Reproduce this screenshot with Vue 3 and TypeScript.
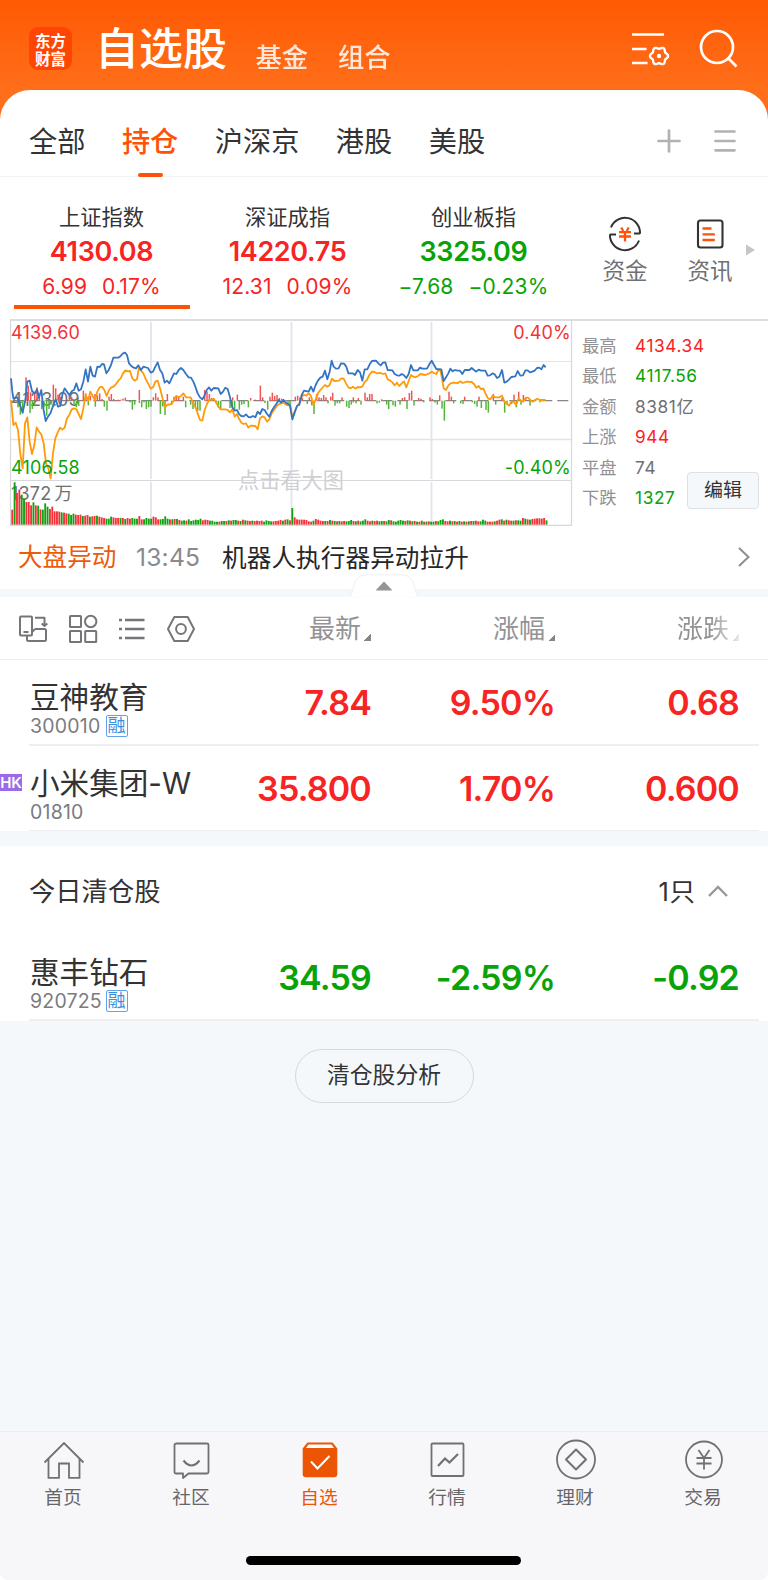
<script setup lang="ts">
type Trend = 'up' | 'down' | 'flat'

interface IndexCard { name: string; value: string; diff: string; pct: string; trend: Trend; active?: boolean }
interface Stat { label: string; value: string; trend: Trend }
interface Stock { name: string; code: string; margin?: boolean; hk?: boolean; price: string; pct: string; diff: string; trend: Trend }

const tabs = ['全部', '持仓', '沪深京', '港股', '美股']
const activeTab = '持仓'

const indexes: IndexCard[] = [
  { name: '上证指数', value: '4130.08', diff: '6.99', pct: '0.17%', trend: 'up', active: true },
  { name: '深证成指', value: '14220.75', diff: '12.31', pct: '0.09%', trend: 'up' },
  { name: '创业板指', value: '3325.09', diff: '−7.68', pct: '−0.23%', trend: 'down' },
]

const stats: Stat[] = [
  { label: '最高', value: '4134.34', trend: 'up' },
  { label: '最低', value: '4117.56', trend: 'down' },
  { label: '金额', value: '8381亿', trend: 'flat' },
  { label: '上涨', value: '944', trend: 'up' },
  { label: '平盘', value: '74', trend: 'flat' },
  { label: '下跌', value: '1327', trend: 'down' },
]

const columns = ['最新', '涨幅', '涨跌']

const held: Stock[] = [
  { name: '豆神教育', code: '300010', margin: true, price: '7.84', pct: '9.50%', diff: '0.68', trend: 'up' },
  { name: '小米集团-W', code: '01810', hk: true, price: '35.800', pct: '1.70%', diff: '0.600', trend: 'up' },
]
const cleared: Stock[] = [
  { name: '惠丰钻石', code: '920725', margin: true, price: '34.59', pct: '-2.59%', diff: '-0.92', trend: 'down' },
]

const nav = ['首页', '社区', '自选', '行情', '理财', '交易']

// Outline of the six-lobed gear in the header.
const gear = Array.from({ length: 72 }, (_, i) => {
  const a = (i * Math.PI) / 36
  const r = 8.1 + 0.95 * Math.cos(6 * a)
  return `${(28 + r * Math.cos(a)).toFixed(2)},${(26 + r * Math.sin(a)).toFixed(2)}`
}).join(' ')

// Chart series are stored in thirds of a pixel.
const priceLine =
  '33,205 37,245 40,265 52,262 60,285 68,308 76,270 82,215 89,212 96,243 104,250 111,238 117,262 124,240 130,295 137,333 144,320 152,308 160,285 167,268 174,290 181,288 188,250 194,235 201,245 208,255 216,243 222,240 229,220 236,242 243,238 250,215 257,178 264,215 271,170 278,197 285,200 292,170 299,171 306,162 312,163 319,190 326,180 333,165 340,143 355,143 362,138 369,130 375,128 381,135 387,160 394,168 401,173 408,175 415,166 423,180 430,170 444,174 452,188 459,185 466,170 473,157 480,180 487,190 494,218 501,212 508,220 515,205 522,190 529,192 536,180 543,174 550,180 558,192 566,202 573,203 580,215 586,230 593,250 600,262 607,268 613,258 620,240 627,232 634,242 641,234 655,235 662,252 669,245 676,233 683,237 690,262 697,292 704,302 711,300 718,313 724,318 731,319 738,313 745,321 752,322 759,318 766,322 773,305 780,312 787,297 794,300 801,312 808,320 815,303 822,292 829,282 836,270 843,278 850,270 860,280 870,285 877,328 884,308 891,288 898,284 905,255 912,242 926,245 933,230 940,245 947,225 954,212 961,203 968,200 975,182 982,208 989,185 995,152 1001,170 1008,176 1016,175 1023,160 1032,161 1039,170 1045,190 1058,190 1065,195 1073,180 1080,187 1087,212 1094,178 1102,178 1109,163 1116,153 1128,152 1135,160 1142,166 1149,158 1156,157 1163,180 1177,181 1184,192 1191,196 1198,197 1205,192 1212,196 1219,204 1226,192 1233,165 1240,181 1253,181 1260,173 1267,176 1281,176 1288,163 1295,152 1302,165 1309,177 1324,178 1331,213 1338,202 1345,190 1351,176 1358,184 1365,180 1372,182 1380,182 1387,192 1394,180 1408,180 1415,174 1422,180 1429,185 1436,179 1443,182 1456,182 1463,197 1470,196 1477,190 1484,193 1491,204 1498,200 1506,180 1513,218 1520,215 1527,209 1534,201 1546,199 1553,183 1561,197 1569,196 1576,181 1583,181 1590,187 1597,185 1604,182 1611,174 1618,173 1624,178 1631,165 1637,172'
const averageLine =
  '33,270 36,300 40,345 47,338 54,360 61,432 68,475 75,340 82,322 89,395 96,432 103,405 110,352 117,365 124,373 131,400 138,460 145,475 152,505 159,430 166,385 173,368 180,353 187,359 194,353 201,325 208,315 215,298 222,295 229,297 236,312 243,327 250,295 257,255 264,272 271,245 278,258 285,272 292,245 299,232 306,230 313,240 320,258 327,240 334,232 341,230 348,222 355,212 362,205 369,190 376,181 383,184 390,183 397,205 404,212 411,208 416,176 423,182 430,190 437,207 444,220 452,236 459,232 466,215 473,212 480,235 487,262 494,292 501,285 515,282 522,270 529,258 536,262 543,258 550,250 558,262 572,262 579,278 586,290 593,310 600,330 607,332 614,300 621,282 628,268 635,270 641,266 648,276 655,290 662,298 676,298 683,300 690,307 697,298 704,320 711,312 718,328 724,338 731,342 738,340 745,353 752,347 766,348 773,358 780,325 787,319 794,322 801,335 808,328 815,310 822,300 829,290 836,283 850,278 860,285 870,288 877,322 884,305 891,288 898,280 905,260 912,255 919,257 926,250 933,258 940,285 947,268 954,250 961,240 975,225 982,230 989,225 996,206 1003,213 1017,212 1024,205 1031,206 1038,220 1045,232 1052,235 1059,230 1066,236 1073,231 1080,232 1087,230 1094,216 1101,210 1108,195 1116,185 1123,186 1130,190 1142,189 1149,192 1156,190 1163,208 1170,211 1177,217 1184,226 1191,218 1198,228 1205,220 1212,214 1219,232 1226,213 1233,195 1240,200 1247,202 1254,198 1261,192 1276,195 1288,190 1295,185 1302,189 1309,192 1314,182 1321,180 1326,205 1331,235 1338,240 1345,226 1352,220 1360,218 1374,219 1381,214 1388,219 1401,215 1415,216 1422,222 1429,233 1436,228 1443,238 1450,235 1457,252 1464,265 1471,268 1478,257 1485,262 1498,262 1506,257 1513,275 1520,280 1527,287 1534,275 1541,275 1548,285 1556,265 1563,272 1570,275 1577,263 1584,263 1591,270 1598,275 1605,270 1612,266 1619,270 1637,270'

const flow =
  '78:70 85:45 92:25 104:20 111:40 118:15 160:48 167:37 174:18 181:12 208:18 215:10 250:30 257:22 264:10 271:14 285:20 292:16 299:22 306:5 327:12 334:20 341:5 355:3 362:3 369:6 376:9 418:32 460:10 467:22 474:10 502:20 522:12 529:15 536:10 550:12 614:32 621:28 628:20 635:8 641:8 698:10 712:18 752:8 766:3 781:45 788:10 810:12 817:24 824:14 831:17 838:8 845:6 850:5 886:12 893:15 900:10 907:8 928:10 950:20 957:10 964:8 971:17 978:10 992:12 998:24 1026:10 1060:10 1075:8 1095:24 1102:10 1109:20 1116:20 1145:4 1207:8 1214:10 1228:23 1235:30 1256:8 1263:6 1290:10 1297:5 1319:16 1347:27 1354:12 1394:12 1437:12 1480:20 1506:8 1542:18 1556:27 1570:17 1577:10 ' +
  '54:-20 61:-42 68:-38 90:-37 97:-25 104:-12 125:-25 132:-20 140:-45 147:-25 153:-12 160:-18 222:-12 229:-20 236:-16 265:-14 286:-18 313:-18 321:-30 390:-5 397:-27 404:-12 418:-7 425:-20 432:-5 439:-25 446:-20 453:-18 481:-40 488:-17 495:-43 515:-10 557:-20 572:-12 579:-25 586:-20 593:-30 600:-30 648:-8 655:-20 662:-24 690:-22 697:-20 704:-25 718:-27 725:-12 732:-10 745:-20 795:-7 803:-27 864:-10 870:-12 922:-10 935:-14 942:-40 984:-8 1005:-15 1012:-8 1019:-8 1040:-18 1047:-22 1054:-12 1060:-5 1068:-8 1083:-12 1131:-8 1138:-6 1160:-12 1166:-25 1179:-14 1186:-18 1200:-12 1221:-25 1242:-15 1271:-5 1305:-6 1312:-12 1326:-24 1333:-60 1361:-8 1382:-8 1389:-10 1417:-5 1424:-10 1431:-18 1444:-22 1458:-28 1465:-36 1487:-12 1514:-36 1521:-12 1535:-10 1549:-20 1563:-12 1590:-15 1620:-5'

const flowBars = flow.split(' ').map((item) => {
  const [x, h] = item.split(':').map(Number)
  return { x, y: h > 0 ? 272 - h : 272, h: Math.abs(h), up: h > 0 }
})

// One entry per minute: bar height followed by its direction.
const volume =
  '45r 127g 95r 105r 90g 78g 68r 68r 58r 67g 58r 57g 46r 45g 64g 54g 47r 54r 40r 40r 39r 37g 36r 34r 33g 29g 33g 30r 29r 30r 26g 27r 29r 24g 25r 26r 27g 24r 22r 20r 18g 18g 24g 22r 20r 20r 20g 20r 17g 20r 18r 20g 18g 18g 26r 16r 16g 20g 18g 18g 24r 22r 16r 16g 17g 25g 18g 16r 16g 17r 17g 14r 12g 13g 12r 16g 11g 13g 15g 14g 18g 13r 15r 14r 12g 12g 9g 9g 9r 11g 11g 11r 13g 12r 14g 14g 12r 11g 15r 13g 12r 11r 12g 11r 12r 11r 12r 9g 13g 11g 10g 10r 11r 12r 14r 12g 15r 16g 13r 50g 22r 16r 15r 15r 15r 14r 10r 9r 12g 17r 15r 12r 11r 11g 11r 14g 12r 11g 10r 11g 10r 11r 10g 11g 14g 11r 10g 12r 10g 12g 16g 12r 10r 12g 11r 12r 10g 11g 11r 10g 14g 13r 10g 9g 12g 14g 12g 11r 13g 12r 10g 11r 9g 9r 12g 9r 9g 10r 9g 9g 11r 10g 14g 16g 11r 10r 12g 10r 11g 9r 11g 9r 10g 9r 10g 11r 11g 12r 10r 10g 15g 12g 9r 9r 9r 10g 12r 15r 16g 12r 15g 13r 12r 12g 13r 13g 12g 20r 18g 16r 15g 17r 18r 19r 19r 18r 20r 13g'

const volumeBars = volume.split(' ').map((item, i) => ({
  x: 36.5 + i * 7.06,
  h: parseInt(item, 10),
  up: item.endsWith('r'),
}))
</script>

<template>
  <div class="app">
    <header class="top">
      <div class="logo">东方<br>财富</div>
      <h1>自选股</h1>
      <span class="switch">基金</span>
      <span class="switch">组合</span>
      <svg class="manage" width="40" height="38" viewBox="0 0 40 38" fill="none" stroke="#fff" stroke-width="2.600">
        <path d="M1 4.500H33M1 19H15.500M1 33H16.500" />
        <polygon :points="gear" stroke-linejoin="round" stroke-width="2.400" />
        <circle cx="28" cy="26" r="2.200" fill="#fff" stroke="none" />
      </svg>
      <svg class="search" width="40" height="40" viewBox="0 0 40 40" fill="none" stroke="#fff" stroke-width="2.700">
        <circle cx="18" cy="18" r="16" /><path d="M29.500 29.500L37.500 37.500" />
      </svg>
    </header>

    <main class="sheet">
      <nav class="tabs">
        <span v-for="t in tabs" :key="t" :class="['tab', { active: t === activeTab }]">{{ t }}</span>
        <svg class="plus" width="24" height="24" viewBox="0 0 24 24" stroke="#b2b2b2" stroke-width="2.700" stroke-linecap="round"><path d="M12 1.500V22.500M1.500 12H22.500" /></svg>
        <svg width="22" height="24" viewBox="0 0 22 24" stroke="#b2b2b2" stroke-width="2.700" stroke-linecap="round"><path d="M1.500 2.500H20.500M1.500 12H20.500M1.500 21.300H20.500" /></svg>
      </nav>

      <section class="indexes">
        <div v-for="ix in indexes" :key="ix.name" :class="['index', ix.trend, { active: ix.active }]">
          <span class="index-name">{{ ix.name }}</span>
          <strong>{{ ix.value }}</strong>
          <span class="index-diff"><span>{{ ix.diff }}</span><span>{{ ix.pct }}</span></span>
        </div>
        <div class="shortcut first">
          <svg width="36" height="36" viewBox="0 0 36 36" fill="none" stroke="#333" stroke-width="2">
            <path d="M4 11.500A15 15 0 0 1 33 17.800V17.500H27M32 24.500A15 15 0 0 1 3 18.200V18.500H9" />
            <path stroke="#ff5207" stroke-width="2.300" d="M14.300 11.500L16.200 15M21.700 11.500L19.800 15M12 16.200H24M12 20.500H24M18 15V25.500" />
          </svg>
          <span>资金</span>
        </div>
        <div class="shortcut second">
          <svg width="36" height="36" viewBox="0 0 36 36" fill="none" stroke="#333" stroke-width="2.100">
            <rect x="6" y="4.500" width="24.500" height="27" rx="2.500" />
            <path stroke="#ff5207" stroke-width="2.300" d="M10.500 12.500H19.500M10.500 18.300H22.800M10.500 24H22.800" />
          </svg>
          <span>资讯</span>
        </div>
        <svg class="more" width="9" height="12" viewBox="0 0 9 12"><path d="M0 0.500L9 6L0 11.500Z" fill="#c6c6c8" /></svg>
      </section>

      <section class="market">
        <svg class="chart" width="573" height="209" viewBox="0 318 573 209">
          <g fill="none" stroke="#e2e4ec">
            <path stroke-width="1" d="M10 361.500H572" />
            <path stroke-width="1.500" d="M10 439.500H572" />
            <path stroke-width="1.800" d="M151 322V479M151 482V525M291.500 322V479M291.500 482V525M431.500 322V479M431.500 482V525" />
            <path stroke="#d6d8de" stroke-width="1.200" d="M10 480.500H572M10 525.300H572M10.500 320V525.500M571.500 320V525.500" />
          </g>
          <text x="291" y="488" class="hint" text-anchor="middle">点击看大图</text>
          <path d="M13.300 400.600H571" stroke="#858585" stroke-width="1.200" stroke-dasharray="11 5" />
          <text class="label grey" x="11" y="406.200">4123.09</text>
          <text class="label grey" x="11" y="500">1372<tspan dx="3">万</tspan></text>
          <g transform="translate(0 310) scale(0.33333)">
            <rect v-for="(b, i) in flowBars" :key="'f' + i" :x="b.x - 2.2" :y="b.y" width="4.500" :height="b.h" :fill="b.up ? '#ee5657' : '#55b53c'" />
            <rect v-for="(b, i) in volumeBars" :key="'v' + i" :x="b.x - 2.500" :y="644 - b.h" width="5.600" :height="b.h" :fill="b.up ? '#f43137' : '#10a112'" />
            <polyline :points="averageLine" fill="none" stroke="#ff9a09" stroke-width="5.400" stroke-linejoin="round" />
            <polyline :points="priceLine" fill="none" stroke="#3375c4" stroke-width="5.400" stroke-linejoin="round" />
          </g>
          <text class="label red" x="11" y="338.500">4139.60</text>
          <text class="label green" x="11" y="473.800">4106.58</text>
          <text class="label red" x="571" y="338.500" text-anchor="end">0.40%</text>
          <text class="label green" x="571" y="473.800" text-anchor="end">-0.40%</text>
        </svg>
        <div class="stats">
          <div v-for="s in stats" :key="s.label" class="stat">
            <span class="stat-label">{{ s.label }}</span><span :class="['stat-value', s.trend]">{{ s.value }}</span>
          </div>
          <button class="edit">编辑</button>
        </div>
      </section>

      <section class="news">
        <span class="news-tag">大盘异动</span>
        <span class="news-time">13:45</span>
        <span class="news-title">机器人执行器异动拉升</span>
        <svg width="14" height="22" viewBox="0 0 14 22" fill="none" stroke="#8e8e90" stroke-width="2"><path d="M2 2L11.500 11L2 20" /></svg>
        <svg class="handle" width="68" height="23" viewBox="0 0 68 23">
          <path d="M.5 22.500Q3 17 4 11Q6 .8 17 .8H51Q62 .8 64 11Q65 17 67.500 22.500" fill="#fff" stroke="#eef1f3" />
          <path d="M25.500 16.500L34 7.500L42.500 16.500Z" fill="#959595" />
        </svg>
      </section>

      <div class="band thin"></div>

      <section class="list-head">
        <svg width="30" height="28" viewBox="0 0 30 28" fill="none" stroke="#76767a" stroke-width="2" stroke-linejoin="round">
          <rect x="2" y="1.500" width="12" height="19" rx="1" /><path d="M5.500 17H10.500M17 2.800H26.500V10M23.700 8.500L26.500 11L29.300 8.500M17 14H26.500Q28 14 28 15.500V24.500Q28 26 26.500 26H10.500Q9 26 9 24.500V21M14 17L17 14" />
        </svg>
        <svg width="30" height="30" viewBox="0 0 30 30" fill="none" stroke="#76767a" stroke-width="2">
          <rect x="2" y="2" width="11" height="11" rx=".6" /><circle cx="22.700" cy="7.500" r="5.700" /><rect x="2" y="17" width="11" height="11" rx=".6" /><rect x="17.200" y="17" width="11" height="11" rx=".6" />
        </svg>
        <svg width="28" height="24" viewBox="0 0 28 24" fill="none" stroke="#76767a" stroke-width="2.400"><path d="M1 3H4M7 3H26.500M1 12H4M7 12H26.500M1 21H4M7 21H26.500" /></svg>
        <svg width="30" height="28" viewBox="0 0 30 28" fill="none" stroke="#76767a" stroke-width="2" stroke-linejoin="round"><path d="M8.300 2H21.700L28 14L21.700 26H8.300L2 14Z" /><circle cx="15" cy="14" r="4.900" /></svg>
        <span v-for="c in columns" :key="c" class="sort">{{ c }}<i></i></span>
      </section>

      <section class="stocks">
        <div v-for="s in held" :key="s.code" class="stock">
          <b v-if="s.hk" class="hk">HK</b>
          <div class="who">
            <span class="name">{{ s.name }}</span>
            <span class="code"><span>{{ s.code }}</span><em v-if="s.margin">融</em></span>
          </div>
          <strong :class="s.trend">{{ s.price }}</strong>
          <strong :class="s.trend">{{ s.pct }}</strong>
          <strong :class="s.trend">{{ s.diff }}</strong>
        </div>
      </section>

      <div class="band"></div>

      <section class="stocks">
        <div class="group">
          <span>今日清仓股</span>
          <span class="count">1只</span>
          <svg width="22" height="14" viewBox="0 0 22 14" fill="none" stroke="#98989a" stroke-width="2.400"><path d="M2 12L11 3L20 12" /></svg>
        </div>
        <div v-for="s in cleared" :key="s.code" class="stock">
          <div class="who">
            <span class="name">{{ s.name }}</span>
            <span class="code"><span>{{ s.code }}</span><em v-if="s.margin">融</em></span>
          </div>
          <strong :class="s.trend">{{ s.price }}</strong>
          <strong :class="s.trend">{{ s.pct }}</strong>
          <strong :class="s.trend">{{ s.diff }}</strong>
        </div>
      </section>
    </main>

    <section class="rest"><button class="analyse">清仓股分析</button></section>

    <footer class="dock">
      <nav class="dock-nav">
        <div v-for="(n, i) in nav" :key="n" :class="['dock-item', { active: i === 2 }]">
          <svg width="42" height="42" viewBox="0 0 42 42" fill="none" stroke="#717173" stroke-width="1.800">
            <path v-if="i === 0" d="M1.500 23.500L21 4L40.500 23.500M5.500 20V38.800H16V24.500H26V38.800H36.500V20" />
            <template v-else-if="i === 1">
              <path stroke-linejoin="round" d="M5.500 4.500H36Q37.500 4.500 37.500 6V33Q37.500 34.500 36 34.500H17.500L12 39V34.500H5Q3.500 34.500 3.500 33V6Q3.500 4.500 5.500 4.500Z" />
              <path stroke-width="2.100" d="M12.500 21.500Q20.500 31.500 28.500 21.500" />
            </template>
            <template v-else-if="i === 2">
              <path fill="#ec5602" stroke="none" d="M8.500 3.500H33.500L38.300 9.500V35Q38.300 38.200 35 38.200H7Q3.700 38.200 3.700 35V9.500Z" />
              <path fill="#fff" stroke="none" d="M9.500 5.500H32.500L35 9H7Z" />
              <path stroke="#fff" stroke-width="2" d="M12 22.500L18.500 29.500L30.500 17" />
            </template>
            <template v-else-if="i === 3">
              <rect x="4.500" y="4.500" width="32" height="32.500" rx="1" /><path stroke-width="2.200" d="M11 27L18 19.500L22.500 23.500L31 15" />
            </template>
            <template v-else-if="i === 4">
              <circle cx="21" cy="20.500" r="19" /><path stroke-width="2.100" stroke-linejoin="round" d="M21 10.500L31 20.500L21 30.500L11 20.500Z" />
            </template>
            <template v-else>
              <circle cx="21" cy="20.500" r="18" /><path d="M15.500 11L21 19L26.500 11M13.500 19H28.500M13.500 24.500H28.500M21 19V30.500" />
            </template>
          </svg>
          <span>{{ n }}</span>
        </div>
      </nav>
      <div class="home-bar"></div>
    </footer>
  </div>
</template>

<style>
html, body { background: #fff; }
</style>

<style scoped>
* { box-sizing: border-box; }
.app {
  width: 768px; height: 1580px; overflow: hidden; display: flex; flex-direction: column;
  font-family: Inter, "Noto Sans CJK SC", sans-serif; color: #333;
  background: linear-gradient(#ff5a04 0, #ff6f1b 95px, #ff6f1b 130px, #fff 130px);
}
svg { display: block; flex: none; overflow: visible; }
button { font: inherit; color: inherit; padding: 0; margin: 0; }
.up { color: #f72424; }
.down { color: #09a309; }
.flat { color: #707072; }

.top { height: 90px; flex: none; display: flex; padding-left: 29px; color: #fff; white-space: nowrap; }
.logo { width: 43px; height: 43px; margin-top: 27px; border-radius: 9px; background: #ff4503; text-align: center; padding-top: 4px; font: 700 15.500px/18px "Noto Sans CJK SC", sans-serif; }
h1 { margin: 18px 0 0 23px; font-size: 44px; line-height: 62px; font-weight: 500; width: 132px; }
.switch { margin: 38px 0 0 28.500px; font-size: 26.300px; line-height: 40px; opacity: .85; font-weight: 500; width: 53px; }
.switch + .switch { margin-left: 29.500px; }
.manage { margin: 30px 0 0 239.500px; }
.search { margin: 29px 0 0 28.500px; }

.sheet { background: #fff; border-radius: 30px 30px 0 0; flex: none; }
.tabs { height: 87px; padding: 0 32px 0 29px; display: flex; align-items: center; gap: 36.500px; border-bottom: 1.500px solid #f2f2f4; font-size: 28.200px; }
.tab { position: relative; line-height: 87px; margin-top: 18px; height: 87px; }
.tab.active { color: #ff5207; font-weight: 500; }
.tab.active::after { content: ""; position: absolute; left: 16px; bottom: 9px; width: 25px; height: 3.500px; border-radius: 2px; background: #ff5207; }
.plus { margin-left: auto; margin-right: -3px; }
.tabs svg { margin-top: 15px; }

.indexes { height: 142px; padding: 0 0 0 8px; display: flex; }
.index { width: 186px; display: flex; flex-direction: column; align-items: center; padding: 25.500px 0 0 1px; position: relative; white-space: nowrap; }
.index-name { color: #333; font-size: 21.300px; line-height: 28px; }
.index strong { font-size: 27px; line-height: 34px; font-weight: 600; margin-top: 4px; letter-spacing: -.35px; }
.index-diff { display: flex; gap: 15px; font-size: 21px; line-height: 28px; margin-top: 4px; letter-spacing: .15px; }
.index.active::after { content: ""; position: absolute; left: 6px; width: 175.500px; bottom: 10.500px; height: 3.500px; background: #ff5207; }
.shortcut { display: flex; flex-direction: column; align-items: center; width: 60px; padding-top: 39px; color: #707072; font-size: 22.500px; line-height: 30px; }
.shortcut span { margin-top: 4px; }
.shortcut.first { margin-left: 29px; }
.shortcut.second { margin-left: 25px; }
.more { margin: 66.500px 0 0 6px; }

.market { height: 207px; border-top: 2px solid #dcdee3; margin-left: 10px; display: flex; }
.chart { margin: -3px 0 0 -10px; }
.label { font-size: 18px; letter-spacing: .2px; }
.hint { font-size: 21.200px; fill: #cfcfd1; }
.red { fill: #f43137; }
.green { fill: #09a309; }
.grey { fill: #707072; }
.stats { position: relative; flex: 1; padding: 10px 0 0 9px; }
.stat { height: 30.400px; line-height: 30.400px; display: flex; font-size: 17.300px; }
.stat-label { width: 53px; color: #929296; }
.stat-value { letter-spacing: .6px; }
.edit { position: absolute; left: 114px; top: 151px; width: 72px; height: 37px; border: 1.500px solid #dde1e6; border-radius: 4px; background: #f5f8fa; font-size: 19px; line-height: 32px; }

.news { position: relative; height: 62.500px; padding: 0 17.500px 0 18px; display: flex; align-items: center; font-size: 24.600px; line-height: 40px; color: #262626; }
.news-tag { color: #ec5b0c; width: 118px; margin-top: -1px; }
.news-time { color: #8a8a8c; width: 86px; margin-top: -1px; letter-spacing: .2px; }
.news-title { letter-spacing: .1px; margin-top: 1px; }
.news svg:not(.handle) { margin-left: auto; margin-top: -1.500px; }
.handle { position: absolute; left: 350px; top: 47.500px; z-index: 1; }
.band { height: 15px; background: #f5f8fa; }
.band.thin { height: 8.500px; }

.list-head { height: 63px; display: flex; align-items: center; border-bottom: 1.500px solid #eeeef0; padding-left: 18px; gap: 20px; }
.list-head svg { margin-top: 1px; }
.sort { font-size: 26px; line-height: 40px; color: #939396; display: flex; align-items: flex-end; width: 65px; white-space: nowrap; margin-top: 2.500px; }
.sort:nth-of-type(1) { margin-left: 93px; }
.sort:nth-of-type(2) { margin-left: 99px; }
.sort:nth-of-type(3) { margin-left: 99px; -webkit-mask: linear-gradient(90deg, #000 50%, transparent 105%); mask: linear-gradient(90deg, #000 50%, transparent 105%); }
.sort i { width: 7px; height: 7px; margin: 0 0 8px 3px; background: linear-gradient(135deg, transparent 50%, #85858a 50%); flex: none; }

.stock { height: 85.600px; position: relative; display: flex; padding-left: 30px; }
.stock::after { content: ""; position: absolute; left: 29px; right: 9px; bottom: 0; height: 1.500px; background: #efeff1; }
.who { width: 157px; padding-top: 18px; white-space: nowrap; display: flex; flex-direction: column; }
.name { font-size: 29.600px; line-height: 38px; }
.code { font-size: 19.500px; line-height: 22px; margin-top: -1px; color: #7b7b7e; display: flex; align-items: center; letter-spacing: .2px; }
.code span { width: 75.500px; }
.code em { font-style: normal; width: 22px; height: 22px; border: 1px solid #5fa3ea; border-radius: 2px; color: #3f8fe0; font-size: 18px; line-height: 20px; text-align: center; letter-spacing: 0; }
.stock strong { width: 184px; text-align: right; font-size: 34px; font-weight: 600; line-height: 86px; letter-spacing: -.8px; }
.hk { position: absolute; left: 0; top: 28.500px; width: 22px; height: 17px; background: #9a6be8; color: #fff; font-size: 15px; line-height: 17px; font-weight: 600; text-align: center; }
.group { height: 89px; display: flex; align-items: center; padding: 0 39px 3px 29px; font-size: 26.300px; }
.group svg { margin-top: 3px; }
.count { margin-left: auto; margin-right: 11.500px; font-size: 25.500px; letter-spacing: .6px; }

.rest { flex: 1; background: #f5f8fa; display: flex; justify-content: center; align-items: flex-start; }
.analyse { margin-top: 28.500px; width: 179px; height: 54px; border: 1.500px solid #d6d9dc; border-radius: 27px; background: transparent; font-size: 22.800px; line-height: 48px; padding-bottom: 3px; }

.dock { height: 149px; flex: none; background: linear-gradient(#f7f7fa, #f7f7fa); border-top: 1.500px solid #eceeef; border-radius: 0 0 8px 8px; display: flex; flex-direction: column; align-items: center; }
.dock-nav { display: flex; width: 768px; }
.dock-item { width: 128px; display: flex; flex-direction: column; align-items: center; padding-top: 7px; font-size: 18.700px; line-height: 26px; color: #666669; }
.dock-item span { margin: 3.500px 2px 0 0; }
.dock-item.active { color: #ec5602; }
.home-bar { width: 275px; height: 9px; border-radius: 5px; background: #000; margin: 45.500px 1px 0 0; }
</style>
